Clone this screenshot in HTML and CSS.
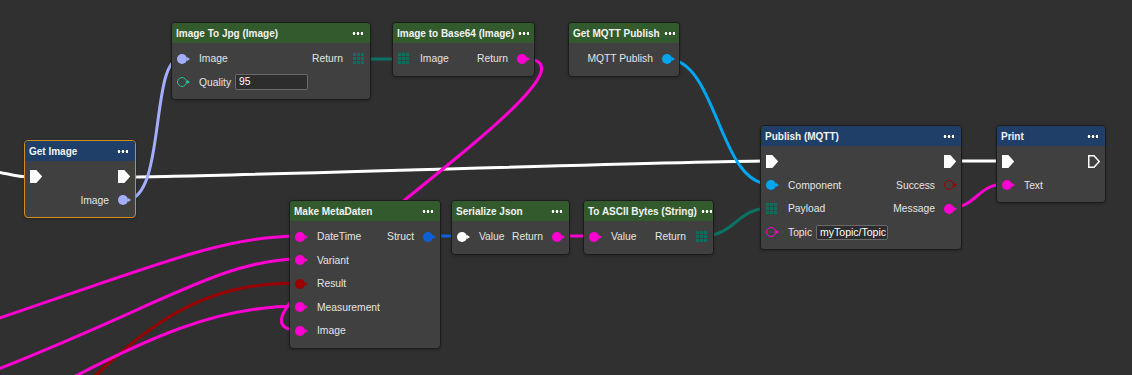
FILE: index.html
```html
<!DOCTYPE html>
<html lang="en">
<head>
    <meta charset="UTF-8">
    <title>Blueprint Graph</title>
    <link rel="stylesheet" href="styles.css">
</head>
<body>
    <div class="graph">
        <svg class="wires" width="1132" height="375" viewBox="0 0 1132 375">
            <defs>
                <symbol id="grid" viewBox="0 0 11 11">
                    <rect x="0" y="0" width="3" height="3"/><rect x="4" y="0" width="3" height="3"/><rect x="8" y="0" width="3" height="3"/>
                    <rect x="0" y="4" width="3" height="3"/><rect x="4" y="4" width="3" height="3"/><rect x="8" y="4" width="3" height="3"/>
                    <rect x="0" y="8" width="3" height="3"/><rect x="4" y="8" width="3" height="3"/><rect x="8" y="8" width="3" height="3"/>
                </symbol>
                <symbol id="exec" viewBox="0 0 12 13">
                    <path d="M0.75 0.75H6L11.25 6.5L6 12.25H0.75Z"/>
                </symbol>
            </defs>

            <!-- exec flow -->
            <path class="wire w-exec" d="M-40 168 C0 169, 10 177, 30 177"/>
            <path class="wire w-exec" d="M130 177 C210 177, 686 161, 766 161"/>
            <path class="wire w-exec" d="M954 161 L1002 161"/>

            <!-- data -->
            <path class="wire w-image" d="M126 200 C166 200, 150 59, 180 59"/>
            <path class="wire w-array" d="M362 59 L398 59"/>
            <path class="wire w-string" d="M524 59 C634 59, 189 330, 299 330"/>
            <path class="wire w-mqtt" d="M667 59 C717 59, 719 184, 769 184"/>
            <path class="wire w-struct" d="M429 236 L461 236"/>
            <path class="wire w-string" d="M557 236 L593 236"/>
            <path class="wire w-array" d="M702 236 C736 236, 736 208, 770 208"/>
            <path class="wire w-string" d="M949 208 C977 208, 977 184, 1005 184"/>

            <!-- inputs from off screen -->
            <path class="wire w-string" d="M-30 328 C150 268, 220 236, 299 236"/>
            <path class="wire w-string" d="M-30 380 C150 312, 220 259, 299 259"/>
            <path class="wire w-result" d="M60 410 C150 320, 200 283, 299 283"/>
            <path class="wire w-string" d="M40 395 C150 335, 220 306, 299 306"/>
        </svg>

        <!-- Get Image -->
        <div class="node get-image selected">
            <div class="node-head head-blue"><span>Get Image</span><span class="dots"></span></div>
            <div class="node-body">
                <div class="row">
                    <svg class="exec"><use href="#exec"/></svg>
                    <svg class="exec"><use href="#exec"/></svg>
                </div>
                <div class="row">
                    <span class="port out"><span class="label">Image</span><span class="pin c-image"></span></span>
                </div>
            </div>
        </div>

        <!-- Image To Jpg -->
        <div class="node to-jpg">
            <div class="node-head head-green"><span>Image To Jpg (Image)</span><span class="dots"></span></div>
            <div class="node-body">
                <div class="row">
                    <span class="port in"><span class="pin c-image"></span><span class="label">Image</span></span>
                    <span class="port out"><span class="label">Return</span><svg class="grid-pin"><use href="#grid"/></svg></span>
                </div>
                <div class="row">
                    <span class="port in"><span class="pin hollow c-float"></span><span class="label">Quality</span><span class="field quality">95</span></span>
                </div>
            </div>
        </div>

        <!-- Image to Base64 -->
        <div class="node to-base64">
            <div class="node-head head-green"><span>Image to Base64 (Image)</span><span class="dots"></span></div>
            <div class="node-body">
                <div class="row">
                    <span class="port in"><svg class="grid-pin"><use href="#grid"/></svg><span class="label">Image</span></span>
                    <span class="port out"><span class="label">Return</span><span class="pin c-string"></span></span>
                </div>
            </div>
        </div>

        <!-- Get MQTT Publish -->
        <div class="node get-mqtt">
            <div class="node-head head-green"><span>Get MQTT Publish</span><span class="dots"></span></div>
            <div class="node-body">
                <div class="row">
                    <span class="port out"><span class="label">MQTT Publish</span><span class="pin c-mqtt"></span></span>
                </div>
            </div>
        </div>

        <!-- Make MetaDaten -->
        <div class="node meta">
            <div class="node-head head-green"><span>Make MetaDaten</span><span class="dots"></span></div>
            <div class="node-body">
                <div class="row">
                    <span class="port in"><span class="pin c-string"></span><span class="label">DateTime</span></span>
                    <span class="port out"><span class="label">Struct</span><span class="pin c-struct"></span></span>
                </div>
                <div class="row">
                    <span class="port in"><span class="pin c-string"></span><span class="label">Variant</span></span>
                </div>
                <div class="row">
                    <span class="port in"><span class="pin c-result"></span><span class="label">Result</span></span>
                </div>
                <div class="row">
                    <span class="port in"><span class="pin c-string"></span><span class="label">Measurement</span></span>
                </div>
                <div class="row">
                    <span class="port in"><span class="pin c-string"></span><span class="label">Image</span></span>
                </div>
            </div>
        </div>

        <!-- Serialize Json -->
        <div class="node serialize">
            <div class="node-head head-green"><span>Serialize Json</span><span class="dots"></span></div>
            <div class="node-body">
                <div class="row">
                    <span class="port in"><span class="pin c-any"></span><span class="label">Value</span></span>
                    <span class="port out"><span class="label">Return</span><span class="pin c-string"></span></span>
                </div>
            </div>
        </div>

        <!-- To ASCII Bytes -->
        <div class="node ascii">
            <div class="node-head head-green"><span>To ASCII Bytes (String)</span><span class="dots"></span></div>
            <div class="node-body">
                <div class="row">
                    <span class="port in"><span class="pin c-string"></span><span class="label">Value</span></span>
                    <span class="port out"><span class="label">Return</span><svg class="grid-pin"><use href="#grid"/></svg></span>
                </div>
            </div>
        </div>

        <!-- Publish (MQTT) -->
        <div class="node publish">
            <div class="node-head head-blue"><span>Publish (MQTT)</span><span class="dots"></span></div>
            <div class="node-body">
                <div class="row">
                    <svg class="exec"><use href="#exec"/></svg>
                    <svg class="exec"><use href="#exec"/></svg>
                </div>
                <div class="row">
                    <span class="port in"><span class="pin c-mqtt"></span><span class="label">Component</span></span>
                    <span class="port out"><span class="label">Success</span><span class="pin hollow c-result"></span></span>
                </div>
                <div class="row">
                    <span class="port in"><svg class="grid-pin"><use href="#grid"/></svg><span class="label">Payload</span></span>
                    <span class="port out"><span class="label">Message</span><span class="pin c-string"></span></span>
                </div>
                <div class="row">
                    <span class="port in"><span class="pin hollow c-string"></span><span class="label">Topic</span><span class="field topic">myTopic/Topic</span></span>
                </div>
            </div>
        </div>

        <!-- Print -->
        <div class="node print">
            <div class="node-head head-blue"><span>Print</span><span class="dots"></span></div>
            <div class="node-body">
                <div class="row">
                    <svg class="exec"><use href="#exec"/></svg>
                    <svg class="exec open"><use href="#exec"/></svg>
                </div>
                <div class="row">
                    <span class="port in"><span class="pin c-string"></span><span class="label">Text</span></span>
                </div>
            </div>
        </div>
    </div>
</body>
</html>
```

FILE: styles.css
```css
body {
    margin: 0;
    background: #303030;
    font-family: 'Liberation Sans', Arial, sans-serif;
    color: #e4e4e4;
    overflow: hidden;
}

.graph {
    position: relative;
    width: 1132px;
    height: 375px;
    overflow: hidden;
}

/* Wires */
.wires {
    position: absolute;
    left: 0;
    top: 0;
    z-index: 0;
}

.wire {
    fill: none;
    stroke-width: 3;
    stroke-linecap: round;
}

.w-exec   { stroke: #ffffff; }
.w-image  { stroke: #a4aeff; }
.w-array  { stroke: #0b7264; }
.w-string { stroke: #ff00d2; }
.w-mqtt   { stroke: #00a6f2; }
.w-struct { stroke: #0f5fd6; }
.w-result { stroke: #9a0000; }

/* Nodes */
.node {
    position: absolute;
    z-index: 1;
    background: #404040;
    border: 1px solid #1c1c1c;
    border-radius: 4px;
    box-sizing: border-box;
    overflow: hidden;
    box-shadow: 0 1px 3px rgba(0, 0, 0, 0.25);
}

.node.selected {
    border-color: #d48c1c;
}

.node-head {
    height: 20px;
    padding: 0 7px 0 4px;
    display: flex;
    align-items: center;
    justify-content: space-between;
    font-size: 10px;
    font-weight: bold;
    color: #f2f2f2;
    white-space: nowrap;
}

.head-green { background: #325a2c; }
.head-blue  { background: #1f3e68; }

.dots {
    width: 11px;
    height: 3px;
    flex: none;
    margin-left: 4px;
    background: radial-gradient(circle, #ffffff 1.2px, transparent 1.6px) 0 0 / 4px 3px repeat-x;
}

.node-body {
    padding: 4px 0 5px;
}

.row {
    height: 23.5px;
    padding: 0 4px 0 4px;
    display: flex;
    align-items: center;
    justify-content: space-between;
}

.port {
    display: flex;
    align-items: center;
    gap: 9px;
    font-size: 10.3px;
    white-space: nowrap;
}

.port.out {
    margin-left: auto;
}

/* Pins */
.pin {
    position: relative;
    width: 10px;
    height: 10px;
    flex: none;
    border-radius: 50%;
    background: currentColor;
    margin-right: 3px;
    box-sizing: border-box;
}

.pin::after {
    content: '';
    position: absolute;
    left: 10px;
    top: 3px;
    border-left: 3px solid currentColor;
    border-top: 2px solid transparent;
    border-bottom: 2px solid transparent;
}

.pin.hollow {
    background: transparent;
    border: 1.5px solid currentColor;
}

.pin.hollow::after {
    left: 8.5px;
    top: 1.5px;
}

.port.in .pin {
    margin-left: 1px;
}

.c-image  { color: #a4aeff; }
.c-float  { color: #1ec49a; }
.c-string { color: #ff00d2; }
.c-mqtt   { color: #00a6f2; }
.c-struct { color: #0f5fd6; }
.c-result { color: #9a0000; }
.c-any    { color: #ffffff; }

.grid-pin {
    width: 11px;
    height: 11px;
    flex: none;
    fill: #0b6e5e;
    margin: 0 2px 0 1px;
}

.exec {
    width: 12px;
    height: 13px;
    flex: none;
    fill: #ffffff;
    stroke: #ffffff;
    stroke-width: 1.5;
    margin: 0 1px;
}

.exec.open {
    fill: none;
}

/* Inline value boxes */
.field {
    height: 16px;
    box-sizing: border-box;
    margin-left: -5px;
    padding: 0 3px;
    background: #2d2d2d;
    border: 1px solid #6a6a6a;
    border-radius: 2px;
    color: #ffffff;
    font-size: 10.3px;
    line-height: 14px;
}

.field.quality { width: 73px; }
.field.topic   { width: 72px; height: 15px; line-height: 13px; font-size: 10.5px; }

/* Node placement on the canvas */
.get-image  { left: 24px;  top: 140px; width: 112px; }
.to-jpg     { left: 171px; top: 22px;  width: 200px; }
.to-base64  { left: 392px; top: 22px;  width: 143px; }
.get-mqtt   { left: 568px; top: 22px;  width: 112px; }
.meta       { left: 289px; top: 200px; width: 152px; }
.serialize  { left: 451px; top: 200px; width: 119px; }
.ascii      { left: 583px; top: 200px; width: 131px; }
.publish    { left: 760px; top: 125px; width: 202px; }
.print      { left: 996px; top: 125px; width: 110px; }
```
